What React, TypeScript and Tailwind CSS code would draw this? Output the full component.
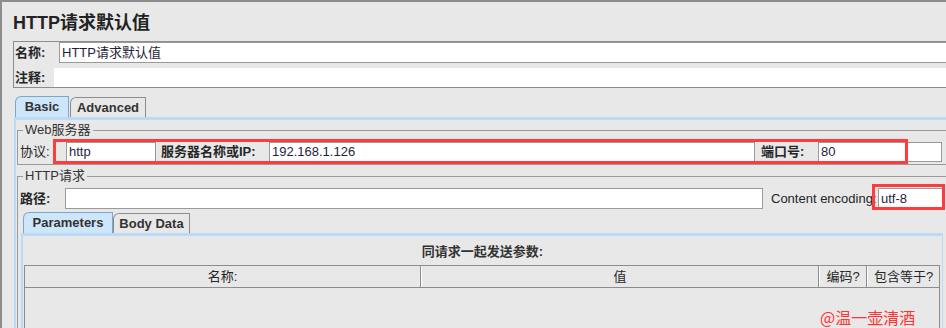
import React from "react";

const font = { fontFamily: '"Liberation Sans", "Noto Sans CJK SC", sans-serif' };

function Label({ children, className = "" }: { children: React.ReactNode; className?: string }) {
  return <div className={`flex h-full items-center whitespace-nowrap text-[13px] ${className}`}>{children}</div>;
}

function Input({ value = "", className = "" }: { value?: string; className?: string }) {
  return (
    <div className={`flex h-full items-center border border-[#9a9a9a] bg-white pl-[2px] text-[13px] text-[#1f1f3a] ${className}`}>
      {value}
    </div>
  );
}

export default function App() {
  return (
    <div
      className="relative h-[328px] w-[946px] overflow-hidden border-l-2 border-t-2 border-[#8c8c8c] bg-[#e8e8e8] text-[#262626]"
      style={font}
    >
      {/* Title */}
      <div className="h-[39px] pl-[11px] pt-[10px] text-[18px] font-bold leading-[22px] text-[#222]">HTTP请求默认值</div>

      {/* Name / comment panel */}
      <div className="ml-[11px] flex flex-col border border-r-0 border-[#8c8c8c]">
        <div className="flex h-[21px]">
          <Label className="w-[45px] pl-[1px] font-bold">名称:</Label>
          <Input value="HTTP请求默认值" className="flex-1 border-r-0" />
        </div>
        <div className="mt-[5px] flex h-[19px]">
          <Label className="w-[40px] pl-[1px] font-bold">注释:</Label>
          <div className="flex-1 bg-white" />
        </div>
      </div>

      {/* Outer tabs */}
      <div className="ml-[13px] mt-[8px] flex h-[21px] items-end">
        <div className="flex h-[21px] w-[54px] items-center justify-center rounded-tl-[6px] border border-b-0 border-[#7fa6cd] bg-[#cde6fa] text-[13px] font-bold text-[#333]">
          Basic
        </div>
        <div className="ml-[1px] flex h-[20px] w-[76px] items-center justify-center rounded-tl-[6px] border border-b-0 border-[#8c8c8c] text-[13px] font-bold text-[#333]">
          Advanced
        </div>
      </div>

      {/* Outer tab panel */}
      <div className="ml-[12px] h-[260px] border-l-2 border-t-[3px] border-[#bcdaf3]">
        {/* Web server group */}
        <fieldset className="ml-[1px] mt-[2px] border border-r-0 border-[#9a9a9a] pb-[2px] pt-[4px]">
          <legend className="ml-[5px] px-[2px] text-[13px] leading-[16px] text-[#333]">Web服务器</legend>
          <div className="flex h-[20px]">
            <Label className="w-[48px] pl-[2px]">协议:</Label>
            <Input value="http" className="w-[90px]" />
            <Label className="w-[113px] pl-[5px] font-bold">服务器名称或IP:</Label>
            <Input value="192.168.1.126" className="w-[486px]" />
            <Label className="w-[63px] pl-[6px] font-bold">端口号:</Label>
            <Input value="80" className="w-[124px]" />
          </div>
        </fieldset>

        {/* HTTP request group */}
        <fieldset className="ml-[1px] mt-[3px] h-[200px] border border-r-0 border-[#9a9a9a] pt-[4px]">
          <legend className="ml-[5px] px-[2px] text-[13px] leading-[16px] text-[#333]">HTTP请求</legend>
          <div className="flex h-[21px]">
            <Label className="w-[47px] pl-[2px] font-bold">路径:</Label>
            <Input className="w-[698px]" />
            <Label className="w-[115px] pl-[8px]">Content encoding:</Label>
            <Input value="utf-8" className="w-[65px]" />
          </div>

          {/* Inner tabs */}
          <div className="ml-[5px] mt-[3px] flex h-[21px] items-end">
            <div className="flex h-[21px] w-[90px] items-center justify-center rounded-tl-[6px] border border-b-0 border-[#7fa6cd] bg-[#cde6fa] text-[13px] font-bold text-[#333]">
              Parameters
            </div>
            <div className="flex h-[20px] w-[77px] items-center justify-center rounded-tl-[6px] border border-b-0 border-[#8c8c8c] text-[13px] font-bold text-[#333]">
              Body Data
            </div>
          </div>

          {/* Inner tab panel */}
          <div className="ml-[3px] flex h-[120px] w-[922px] flex-col border-l-2 border-r border-t-[3px] border-[#bcdaf3]">
            <div className="mt-[8px] h-[16px] text-center text-[13px] font-bold leading-[16px] text-[#333]">
              同请求一起发送参数:
            </div>
            <div className="ml-[1px] mt-[5px] flex w-[916px] flex-1 flex-col">
              <div className="flex h-[23px] border border-[#8c8c8c] text-[13px] text-[#262626]">
                <div className="flex w-[396px] items-center justify-center border-r border-[#8c8c8c]">名称:</div>
                <div className="flex w-[398px] items-center justify-center border-l border-r border-l-white border-r-[#8c8c8c]">值</div>
                <div className="flex w-[48px] items-center justify-center border-l border-r border-l-white border-r-[#8c8c8c]">编码?</div>
                <div className="flex flex-1 items-center justify-center border-l border-l-white">包含等于?</div>
              </div>
              <div className="flex-1 border-l border-r border-[#8c8c8c]" />
            </div>
          </div>
        </fieldset>
      </div>

      {/* Red highlight boxes (annotations over content) */}
      <div className="absolute left-[51px] top-[137px] h-[25px] w-[855px] border-[3px] border-[#ff3b3b]" />
      <div className="absolute left-[870px] top-[182px] h-[26px] w-[73px] border-[3px] border-[#ff3b3b]" />

      {/* Watermark */}
      <div
        className="absolute left-[818px] top-[305px] text-[16px] leading-[20px] text-[#ff3333]"
        style={{ fontFamily: '"Noto Sans CJK SC", sans-serif' }}
      >
        @温一壶清酒
      </div>
    </div>
  );
}
